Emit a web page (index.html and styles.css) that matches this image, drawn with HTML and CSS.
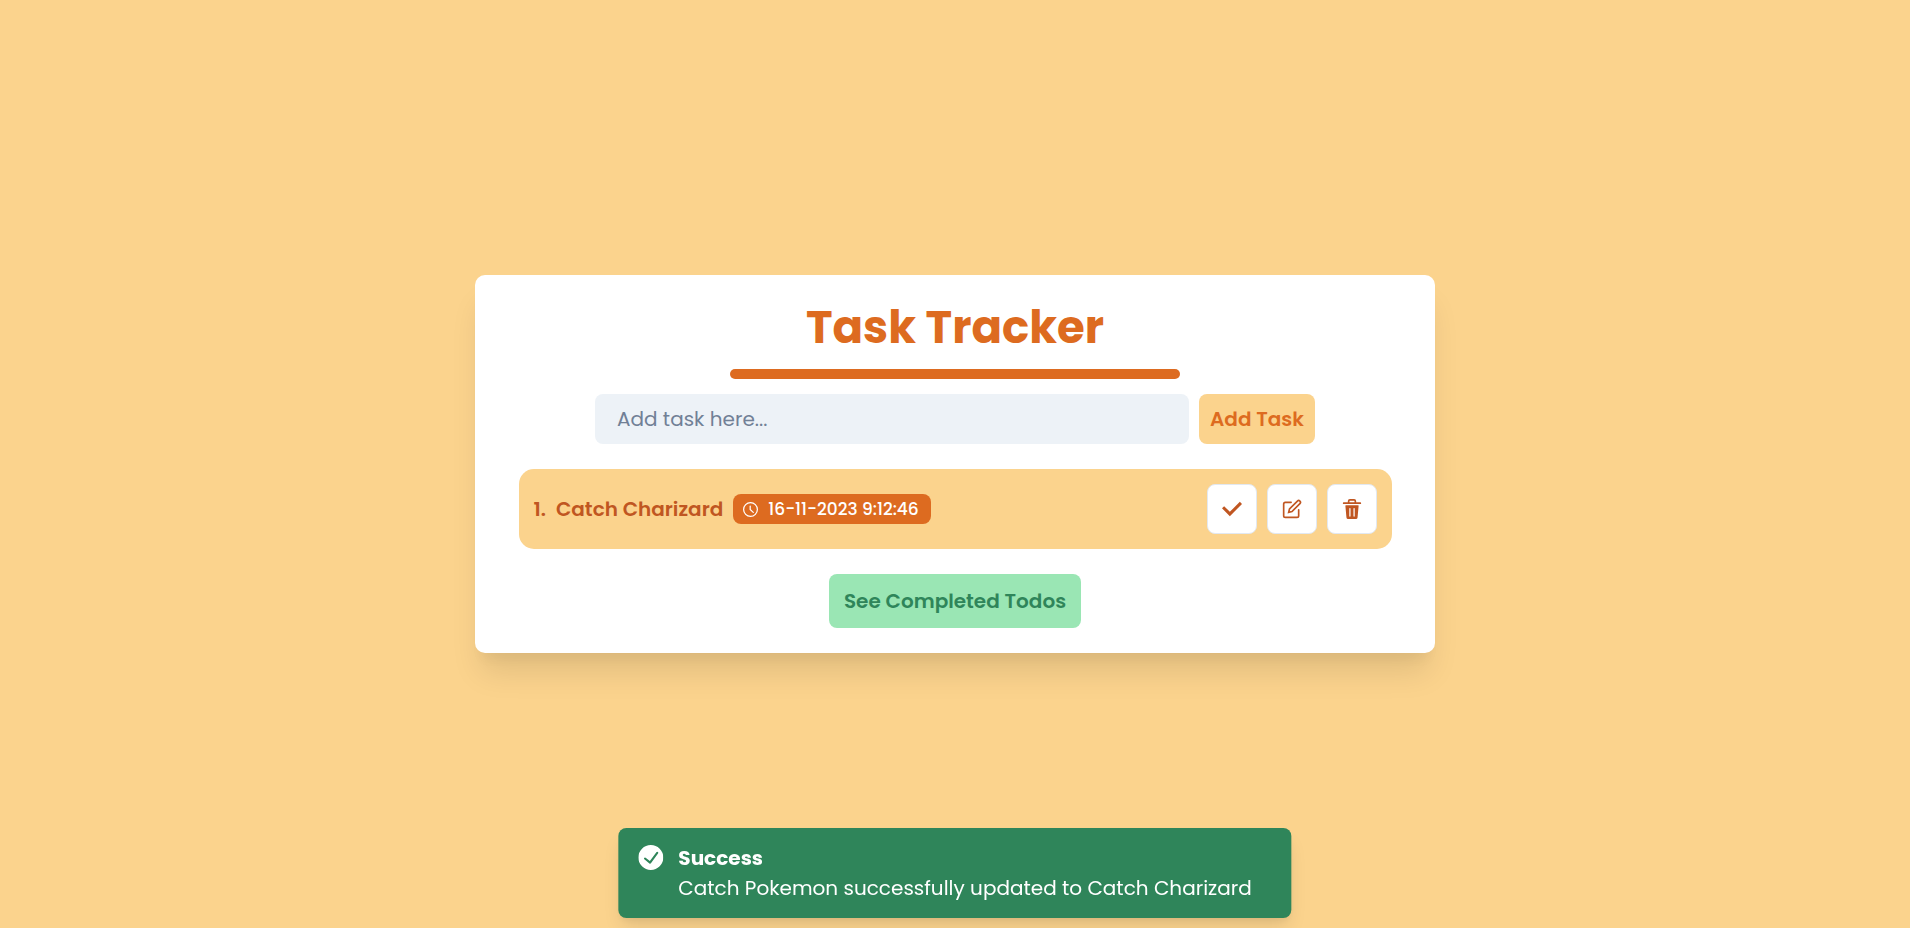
FILE: index.html
```html
<!DOCTYPE html>
<html lang="en">
<head>
<meta charset="utf-8">
<meta name="viewport" content="width=device-width, initial-scale=1">
<title>Task Tracker</title>
<link rel="stylesheet" href="styles.css">
</head>
<body>
<main class="card">
  <h1 class="title">Task Tracker</h1>
  <div class="title-bar"></div>
  <form class="task-form">
    <input class="task-input" type="text" placeholder="Add task here..." aria-label="Add task">
    <button class="add-button" type="submit">Add Task</button>
  </form>
  <ul class="task-list">
    <li class="task">
      <span class="task-number">1.</span>
      <span class="task-name">Catch Charizard</span>
      <span class="badge">
        <svg class="badge-icon" viewBox="0 0 24 24" aria-hidden="true"><path d="M12,0A12,12,0,1,0,24,12,12.014,12.014,0,0,0,12,0Zm0,22A10,10,0,1,1,22,12,10.011,10.011,0,0,1,12,22Z"/><path d="M17.134,15.81,12.5,11.561V6.5a1,1,0,0,0-2,0V12a1,1,0,0,0,.324.738l4.959,4.545a1.01,1.01,0,0,0,1.413-.061A1,1,0,0,0,17.134,15.81Z"/></svg>
        <time>16-11-2023 9:12:46</time>
      </span>
      <div class="actions">
        <button class="icon-button" type="button" aria-label="Complete task">
          <svg class="icon" viewBox="0 0 14 14" aria-hidden="true"><polygon points="5.5 12 14 3.5 12.5 2 5.5 9 1.5 5 0 6.5"/></svg>
        </button>
        <button class="icon-button" type="button" aria-label="Edit task">
          <svg class="icon icon-outline" viewBox="0 0 24 24" aria-hidden="true"><path d="M11 4H4a2 2 0 0 0-2 2v14a2 2 0 0 0 2 2h14a2 2 0 0 0 2-2v-7"/><path d="M18.5 2.5a2.121 2.121 0 0 1 3 3L12 15l-4 1 1-4 9.5-9.5z"/></svg>
        </button>
        <button class="icon-button" type="button" aria-label="Delete task">
          <svg class="icon" viewBox="0 0 24 24" aria-hidden="true"><path d="M19.452 7.5H4.547a.5.5 0 0 0-.5.545l1.287 14.136A2 2 0 0 0 7.326 24h9.347a2 2 0 0 0 1.992-1.819L19.95 8.045a.5.5 0 0 0-.129-.382.5.5 0 0 0-.369-.163zm-9.2 13a.75.75 0 0 1-1.5 0v-9a.75.75 0 0 1 1.5 0zm5 0a.75.75 0 0 1-1.5 0v-9a.75.75 0 0 1 1.5 0zM22 4h-4.75a.25.25 0 0 1-.25-.25V2.5A2.5 2.5 0 0 0 14.5 0h-5A2.5 2.5 0 0 0 7 2.5v1.25a.25.25 0 0 1-.25.25H2a1 1 0 0 0 0 2h20a1 1 0 0 0 0-2zM9 3.75V2.5a.5.5 0 0 1 .5-.5h5a.5.5 0 0 1 .5.5v1.25a.25.25 0 0 1-.25.25h-5.5A.25.25 0 0 1 9 3.75z"/></svg>
        </button>
      </div>
    </li>
  </ul>
  <button class="completed-button" type="button">See Completed Todos</button>
</main>
<div class="toast" role="status">
  <svg class="toast-icon" viewBox="0 0 24 24" aria-hidden="true"><path d="M12,0A12,12,0,1,0,24,12,12.014,12.014,0,0,0,12,0Zm6.927,8.2-6.845,9.289a1.011,1.011,0,0,1-1.43.188L5.764,13.769a1,1,0,1,1,1.25-1.562l4.076,3.261,6.227-8.451A1,1,0,1,1,18.927,8.2Z"/></svg>
  <div class="toast-text">
    <strong class="toast-title">Success</strong>
    <p class="toast-message">Catch Pokemon successfully updated to Catch Charizard</p>
  </div>
</div>
</body>
</html>
```
FILE: styles.css
```css
*,
*::before,
*::after {
  box-sizing: border-box;
}

body {
  margin: 0;
  min-height: 100vh;
  display: flex;
  align-items: center;
  justify-content: center;
  background: #fbd38d;
  font-family: Poppins, Inter, "Open Sans", sans-serif;
  font-size: 20px;
  line-height: 30px;
}

button,
input {
  border: 0;
  margin: 0;
  font: inherit;
}

button {
  cursor: pointer;
}

.card {
  width: 100%;
  max-width: 960px;
  padding: 15px 30px 25px;
  display: flex;
  flex-direction: column;
  align-items: center;
  background: #fff;
  border-radius: 10px;
  box-shadow: 0 25px 31px -6px rgba(0, 0, 0, 0.1), 0 12px 12px -6px rgba(0, 0, 0, 0.04);
}

.title {
  margin: 0;
  padding-bottom: 4px;
  color: #dd6b20;
  font-size: 45px;
  line-height: 75px;
  font-weight: 700;
}

.title-bar {
  width: 50%;
  height: 10px;
  background: #dd6b20;
  border-radius: 5px;
}

.task-form {
  width: 80%;
  margin-top: 15px;
  display: flex;
  gap: 10px;
}

.task-input {
  flex: 1;
  min-width: 0;
  height: 50px;
  padding: 0 22px;
  background: #edf2f7;
  border-radius: 8px;
  color: #1a202c;
}

.task-input::placeholder {
  color: #718096;
  opacity: 1;
}

.add-button {
  flex: 0 0 116px;
  padding: 0;
  background: #fbd38d;
  border-radius: 8px;
  color: #dd6b20;
  font-weight: 600;
}

.task-list {
  width: 97%;
  margin: 25px 0;
  padding: 0;
  list-style: none;
}

.task {
  display: flex;
  align-items: center;
  gap: 10px;
  padding: 15px;
  background: #fbd38d;
  border-radius: 15px;
  color: #c05621;
  font-weight: 600;
}

.badge {
  display: flex;
  align-items: center;
  gap: 10px;
  padding: 0 12px 0 10px;
  background: #dd6b20;
  border-radius: 8px;
  color: #fff;
  font-size: 17px;
  font-weight: 500;
}

.badge-icon {
  width: 15px;
  height: 15px;
  fill: currentColor;
}

.actions {
  margin-left: auto;
  display: flex;
  gap: 10px;
}

.icon-button {
  width: 50px;
  height: 50px;
  padding: 0;
  display: flex;
  align-items: center;
  justify-content: center;
  background: #fff;
  border: 1px solid #e2e8f0;
  border-radius: 8px;
  color: #c05621;
}

.icon {
  width: 20px;
  height: 20px;
  fill: currentColor;
}

.icon-outline {
  fill: none;
  stroke: currentColor;
  stroke-width: 2;
  stroke-linecap: round;
}

.completed-button {
  padding: 12px 15px;
  background: #9ae6b4;
  border-radius: 8px;
  color: #2f855a;
  font-weight: 600;
}

.toast {
  position: fixed;
  bottom: 10px;
  left: 50%;
  transform: translateX(-50%);
  padding: 15px 40px 15px 20px;
  display: flex;
  gap: 15px;
  background: #2f855a;
  border-radius: 8px;
  color: #fff;
  white-space: nowrap;
  box-shadow: 0 12px 19px -4px rgba(0, 0, 0, 0.1), 0 5px 7px -2px rgba(0, 0, 0, 0.05);
}

.toast-icon {
  width: 25px;
  height: 25px;
  margin-top: 2px;
  fill: currentColor;
}

.toast-title {
  display: block;
  font-weight: 700;
}

.toast-message {
  margin: 0;
}
```
